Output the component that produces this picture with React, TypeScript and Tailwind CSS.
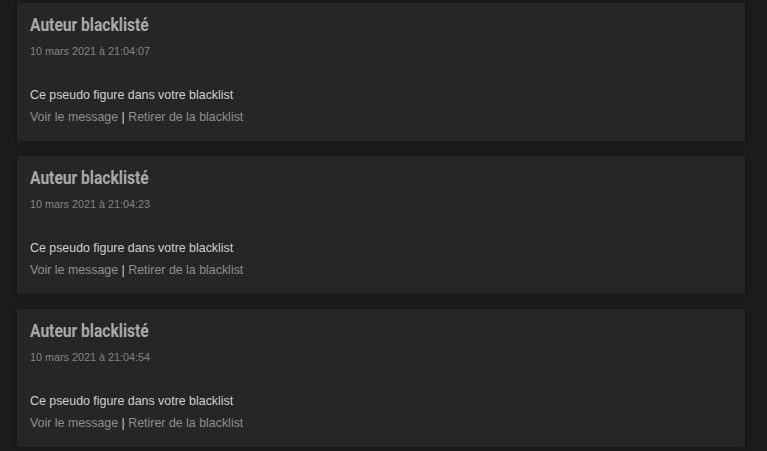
import React from 'react';

const entries = [
  '10 mars 2021 à 21:04:07',
  '10 mars 2021 à 21:04:23',
  '10 mars 2021 à 21:04:54',
];

export default function App() {
  return (
    <div className="min-h-[451px] bg-[#1c1c1c] pl-[17px] pr-[22px] pt-[3px] font-['Liberation_Sans',Arial,sans-serif]">
      <div className="flex flex-col gap-[15px]">
        {entries.map((date) => (
          <div key={date} className="bg-[#262626] px-[13px] pt-[12px] pb-[16px] shadow-[0_0_4px_rgba(0,0,0,0.4)]">
            {/* titre (condensé) */}
            <h2 className="text-[19px] leading-[20px] font-bold text-[#a9a9a9] font-['Roboto',sans-serif]">
              <span className="inline-block origin-left scale-x-[0.82]">Auteur blacklisté</span>
            </h2>
            <div className="mt-[9px] text-[10.8px] leading-[14px] text-[#858585]">{date}</div>
            <p className="mt-[29px] text-[12.4px] leading-[16px] text-[#cfcfcf]">Ce pseudo figure dans votre blacklist</p>
            <div className="mt-[6px] text-[12.4px] leading-[16px] text-[#d0d0d0]">
              <a href="#" className="text-[#8e8e8e]">Voir le message</a> | <a href="#" className="text-[#8e8e8e]">Retirer de la blacklist</a>
            </div>
          </div>
        ))}
      </div>
    </div>
  );
}
